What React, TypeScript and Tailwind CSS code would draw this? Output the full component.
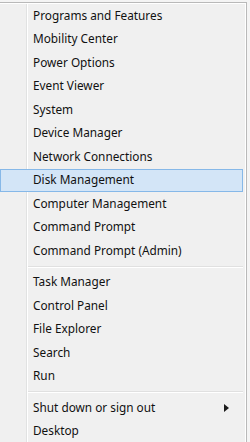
import React from 'react';

type Item = { label: string; active?: boolean; submenu?: boolean };

const groups: Item[][] = [
    [
        { label: 'Programs and Features' },
        { label: 'Mobility Center' },
        { label: 'Power Options' },
        { label: 'Event Viewer' },
        { label: 'System' },
        { label: 'Device Manager' },
        { label: 'Network Connections' },
        { label: 'Disk Management', active: true },
        { label: 'Computer Management' },
        { label: 'Command Prompt' },
        { label: 'Command Prompt (Admin)' },
    ],
    [
        { label: 'Task Manager' },
        { label: 'Control Panel' },
        { label: 'File Explorer' },
        { label: 'Search' },
        { label: 'Run' },
    ],
    [
        { label: 'Shut down or sign out', submenu: true },
        { label: 'Desktop' },
    ],
];

function MenuRow({ item }: { item: Item }) {
    return (
        <div
            className={`h-[23.5px] flex items-center justify-between pl-[32px] pr-[12px] border ${item.active
                ? 'bg-[#d3e5f7] border-[#86b8e8]'
                : 'border-transparent'
                }`}
        >
            <span className="text-[11.8px] text-[#111111] leading-none whitespace-nowrap">{item.label}</span>
            {item.submenu && (
                <svg width="5" height="8" viewBox="0 0 5 8" className="mr-[1px]">
                    <path d="M0 0 L5 4 L0 8 Z" fill="#1b1b1b" />
                </svg>
            )}
        </div>
    );
}

export default function App() {
    return (
        <div
            className="w-[250px] h-[442px] overflow-hidden bg-[#f4f4f4] pt-[2px] pr-[3px]"
            style={{ fontFamily: '"Noto Sans", "Open Sans", sans-serif' }}
        >
            <div className="h-full border-t border-r border-[#b9b9b9] bg-[#f0f0f0]">
                <div className="h-full border-t border-r border-white bg-[linear-gradient(to_right,#f0f0f0_26px,#e1e2e2_26px,#e1e2e2_27px,#ffffff_27px,#ffffff_28px,#f0f0f0_28px)] pr-[2px]">
                    {groups.map((group, gi) => (
                        <div key={gi}>
                            {gi > 0 && (
                                <div className="py-[3px] pl-[28px]">
                                    <div className="border-t border-[#e0e0e0] border-b border-b-white" />
                                </div>
                            )}
                            {group.map(item => (
                                <MenuRow key={item.label} item={item} />
                            ))}
                        </div>
                    ))}
                </div>
            </div>
        </div>
    );
}
